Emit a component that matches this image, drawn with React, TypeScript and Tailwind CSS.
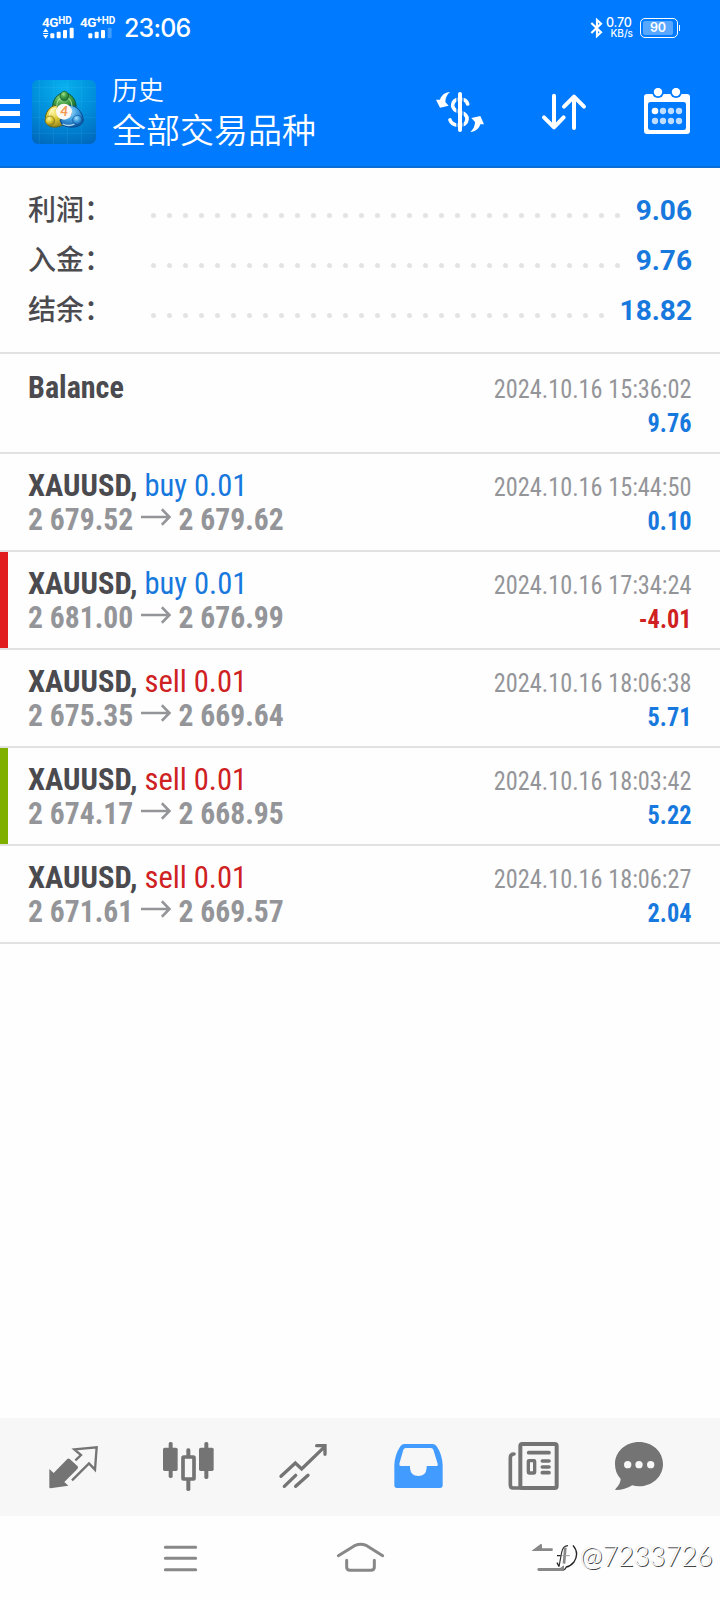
import type { ReactNode } from "react";

type Deal = {
  side?: "buy" | "sell";
  from?: string;
  to?: string;
  time: string;
  profit: string;
  mark?: "red" | "green";
};

const deals: Deal[] = [
  { side: "buy", from: "2 679.52", to: "2 679.62", time: "2024.10.16 15:44:50", profit: "0.10" },
  { side: "buy", from: "2 681.00", to: "2 676.99", time: "2024.10.16 17:34:24", profit: "-4.01", mark: "red" },
  { side: "sell", from: "2 675.35", to: "2 669.64", time: "2024.10.16 18:06:38", profit: "5.71" },
  { side: "sell", from: "2 674.17", to: "2 668.95", time: "2024.10.16 18:03:42", profit: "5.22", mark: "green" },
  { side: "sell", from: "2 671.61", to: "2 669.57", time: "2024.10.16 18:06:27", profit: "2.04" },
];

function SignalBars({ arrows, faded }: { arrows?: boolean; faded?: boolean }) {
  return (
    <svg className="h-[12px] w-[33px]" viewBox="0 0 99 36" fill="#fff">
      {arrows && (
        <>
          <path d="M3 15 L11 4 L19 15Z" />
          <path d="M3 24 L11 35 L19 24Z" />
          <rect x="3" y="18" width="16" height="3" />
        </>
      )}
      <rect x="25" y="19" width="12" height="15" rx="3" />
      <rect x="44" y="14" width="12" height="20" rx="3" />
      <rect x="63" y="9" width="12" height="25" rx="3" />
      <rect x="83" y="2" width="12" height="32" rx="3" opacity={faded ? 0.25 : 1} />
    </svg>
  );
}

function StatusBar() {
  return (
    <div className="flex h-14 items-start text-white">
      <div className="ml-[42px] mt-[16px] w-[37px]">
        <div className="flex h-[11px] items-start font-[Roboto] leading-none font-bold">
          <span className="text-[13.5px] leading-[13px] tracking-[-0.4px]">4G</span>
          <span className="text-[10px] leading-[9px]">HD</span>
        </div>
        <SignalBars arrows />
      </div>
      <div className="mt-[16px] ml-px w-[40px]">
        <div className="flex h-[11px] items-start font-[Roboto] leading-none font-bold">
          <span className="text-[13.5px] leading-[13px] tracking-[-0.6px]">4G</span>
          <span className="text-[11px] leading-[7px]">+</span>
          <span className="text-[10px] leading-[9px]">HD</span>
        </div>
        <SignalBars faded />
      </div>
      <div className="mt-[13px] ml-[4px] w-[80px] font-[Inter] text-[25px] leading-[30px] font-medium tracking-[-0.8px]">23:06</div>
      <svg className="mt-[18px] ml-auto h-[20px] w-[13px]" viewBox="0 0 39 60" fill="none" stroke="#fff" strokeWidth="6.5">
        <path d="M4 15 L33 43 L21 54 V6 L33 17 L4 45" />
      </svg>
      <div className="mt-[17px] ml-[3px] w-[27px] font-[Inter] font-medium">
        <div className="text-[12.5px] leading-[12px] tracking-[-0.2px]">0.70</div>
        <div className="text-right text-[10px] leading-[9px]">KB/s</div>
      </div>
      <div className="mt-[18px] ml-[7px] flex h-5 w-[38px] rounded-[5px] border border-white p-[2px]">
        <div className="flex w-[30px] items-center justify-center rounded-[2px] bg-white/35 font-[Inter] text-[12.5px] leading-none font-semibold">90</div>
      </div>
      <div className="mt-[25px] mr-[40px] ml-px h-[6px] w-px bg-white" />
    </div>
  );
}

function AppLogo() {
  return (
    <svg className="h-16 w-16" viewBox="0 0 192 192">
      <defs>
        <radialGradient id="tile" cx="50%" cy="12%" r="95%">
          <stop offset="0" stopColor="#08b0ee" />
          <stop offset="0.5" stopColor="#0090dc" />
          <stop offset="1" stopColor="#0069bd" />
        </radialGradient>
        <radialGradient id="green" cx="40%" cy="30%" r="70%">
          <stop offset="0" stopColor="#9be08a" />
          <stop offset="0.5" stopColor="#45a045" />
          <stop offset="1" stopColor="#156c34" />
        </radialGradient>
        <radialGradient id="yellow" cx="40%" cy="30%" r="70%">
          <stop offset="0" stopColor="#fff6a0" />
          <stop offset="0.5" stopColor="#ddc935" />
          <stop offset="1" stopColor="#9c8a1c" />
        </radialGradient>
        <radialGradient id="blue" cx="40%" cy="30%" r="70%">
          <stop offset="0" stopColor="#a8e2ff" />
          <stop offset="0.5" stopColor="#3f9fe0" />
          <stop offset="1" stopColor="#0f5ca8" />
        </radialGradient>
      </defs>
      <rect width="192" height="192" rx="18" fill="url(#tile)" />
      <path d="M22 0V192M64 0V192M106 0V192M148 0V192M0 22H192M0 64H192M0 112H192M0 160H192" stroke="#5fd0ff" strokeWidth="1.5" opacity="0.25" />
      <path d="M62 84 C60 60 76 40 97 38 C118 40 134 60 132 84 L116 92 L78 92Z" fill="url(#green)" stroke="#0d5a35" strokeWidth="3" />
      <path d="M84 138 C68 146 42 140 40 122 C38 98 54 76 74 76 L88 104 L98 136Z" fill="url(#yellow)" stroke="#5f6420" strokeWidth="3" />
      <path d="M112 76 C134 76 152 96 154 120 C152 142 116 148 90 134 L84 120 L118 104Z" fill="url(#blue)" stroke="#0b4a8c" strokeWidth="3" />
      <path d="M74 80 C74 62 84 52 97 52 C110 52 120 62 120 80" fill="none" stroke="#bfecae" strokeWidth="4" opacity="0.7" />
      <path d="M52 112 C52 96 60 86 72 84" fill="none" stroke="#fffad0" strokeWidth="4" opacity="0.8" />
      <path d="M92 132 C104 138 116 138 128 132" fill="none" stroke="#d4f1ff" strokeWidth="4" opacity="0.8" />
      <ellipse cx="97" cy="48" rx="13" ry="14" fill="url(#green)" stroke="#115c33" strokeWidth="2" />
      <circle cx="54" cy="122" r="14" fill="url(#yellow)" stroke="#7b7422" strokeWidth="2" />
      <circle cx="136" cy="120" r="14" fill="url(#blue)" stroke="#0f559c" strokeWidth="2" />
      <circle cx="96" cy="95" r="24" fill="#fbf8f4" />
      <text x="96" y="109" textAnchor="middle" fontFamily="Lato" fontWeight="900" fontStyle="italic" fontSize="40" fill="#f29a52">4</text>
    </svg>
  );
}

function Header() {
  return (
    <header className="h-[168px] border-b-2 border-[#0a6cd6] bg-[#007aff]">
      <StatusBar />
      <div className="flex text-white">
        <div className="mt-[43px] flex h-[29px] w-5 flex-col justify-between">
          <div className="h-[5px] bg-white" />
          <div className="h-[5px] bg-white" />
          <div className="h-[5px] bg-white" />
        </div>
        <div className="mt-6 ml-3">
          <AppLogo />
        </div>
        <div className="mt-[15px] ml-4 font-['Noto_Sans_CJK_SC',sans-serif] font-[350]">
          <div className="text-[26px] leading-[35px]">历史</div>
          <div className="text-[34px] leading-[46px]">全部交易品种</div>
        </div>
        <div className="mt-8 mr-7 ml-auto flex gap-[54px]">
          <svg className="h-[46px] w-[50px]" viewBox="105 264 150 138" fill="#fff">
            <path d="M150 276 C134 277 124 286 120 299 L108 299 L120 323 L146 317 L136 306 C136 294 141 284 150 276Z" />
            <path d="M211 396 C227 395 237 386 241 373 L252 373 L241 348 L214 354 L225 366 C225 378 220 388 211 396Z" />
            <path d="M203 312C200 301 191 297 179 297C165 298 157 306 158 317C160 332 172 333 182 337C194 341 202 346 201 358C200 370 190 377 176 376C162 375 153 369 150 360" fill="none" stroke="#fff" strokeWidth="11" strokeLinecap="round" />
            <path d="M171 284V388M189 284V388" stroke="#007aff" strokeWidth="4" />
            <rect x="174" y="276" width="12" height="120" rx="6" />
          </svg>
          <svg className="h-[46px] w-[50px]" viewBox="417 264 150 138" fill="none" stroke="#fff" strokeWidth="12" strokeLinecap="round" strokeLinejoin="round">
            <path d="M462 287V382M432 352L462 382L491 352" />
            <path d="M522 384V290M492 320L522 290L552 320" />
          </svg>
          <svg className="-ml-px h-[46px] w-[50px]" viewBox="726 264 150 138" fill="#fff">
            <path fillRule="evenodd" d="M741 282H861Q870 282 870 291V393Q870 402 861 402H741Q732 402 732 393V291Q732 282 741 282Z M751 306Q744 306 744 313V383Q744 390 751 390H851Q858 390 858 383V313Q858 306 851 306Z" />
            <g fill="#007aff">
              <circle cx="774" cy="276" r="18" />
              <circle cx="828" cy="276" r="18" />
            </g>
            <circle cx="774" cy="276" r="12.500" />
            <circle cx="828" cy="276" r="12.500" />
            <circle cx="765" cy="333" r="10" />
            <g opacity="0.75">
              <circle cx="789" cy="333" r="9.500" />
              <circle cx="813" cy="333" r="9.500" />
              <circle cx="837" cy="333" r="9.500" />
              <circle cx="765" cy="363" r="9.500" />
              <circle cx="789" cy="363" r="9.500" />
              <circle cx="813" cy="363" r="9.500" />
              <circle cx="837" cy="363" r="9.500" />
            </g>
          </svg>
        </div>
      </div>
    </header>
  );
}

function SummaryRow({ label, value, dots }: { label: string; value: string; dots: number }) {
  return (
    <div className="flex h-[50px] items-start px-7">
      <span className="w-[123px] font-['Noto_Sans_CJK_SC',sans-serif] text-[28px] leading-[46px] font-medium text-[#4a4a4f]">{label}</span>
      <div className="mt-[28px] flex gap-[11px]">
        {Array.from({ length: dots }, (_, i) => (
          <span key={i} className="size-[5px] rounded-full bg-[#e3e3e4]" />
        ))}
      </div>
      <span className="ml-auto font-[Roboto] text-[28px] leading-[52px] font-bold text-[#1778dd]">{value}</span>
    </div>
  );
}

function Row({ left, time, profit, mark, first }: { left: ReactNode; time: string; profit: string; mark?: "red" | "green"; first?: boolean }) {
  const markColor = mark === "red" ? "bg-[#e11d1f]" : mark === "green" ? "bg-[#7fb000]" : "";
  return (
    <div className={`flex border-b-2 border-[#e2e2e3] font-['Roboto_Condensed',Roboto,sans-serif] ${first ? "h-[100px]" : "h-[98px]"}`}>
      <div className={`w-2 ${markColor}`} />
      <div className={`ml-5 flex grow justify-between pr-7 ${first ? "pt-4" : "pt-3.5"}`}>
        <div className="text-[32px] leading-[34px] font-bold whitespace-pre text-[#4a4a4f]">{left}</div>
        <div className="mt-[2px] origin-right scale-x-[0.935] text-right text-[26px] leading-[34px]">
          <div className="text-[#949599]">{time}</div>
          <div className={`font-bold ${profit.startsWith("-") ? "text-[#cf2122]" : "text-[#1778dd]"}`}>{profit}</div>
        </div>
      </div>
    </div>
  );
}

function DealTitle({ deal }: { deal: Deal }) {
  return (
    <>
      <div className="origin-left scale-x-[0.955]">
        XAUUSD, <span className={`font-normal ${deal.side === "buy" ? "text-[#1778dd]" : "text-[#cf2122]"}`}>{deal.side} 0.01</span>
      </div>
      <div className="flex origin-left scale-x-[0.925] text-[#949599]">
        <span>{deal.from}</span>
        <svg className="mx-[8px] mt-[6px] h-[18px] w-[33px]" viewBox="0 0 96 54" preserveAspectRatio="none" fill="none" stroke="currentColor" strokeWidth="8">
          <path d="M0 27H90M66 4L90 27L66 50" />
        </svg>
        <span>{deal.to}</span>
      </div>
    </>
  );
}

function TabBar() {
  return (
    <nav className="flex h-[98px] bg-[#f7f7f7] pt-[23px] pl-12 text-[#747474]">
      <svg className="h-[50px] w-[52px]" viewBox="144 123 156 150" fill="currentColor">
        <path d="M148 207 L161 219 L202 177 Q206 174 210 178 L233 199 Q236 203 232 207 L193 246 L205 257 L151 265 Q148 265 148 262Z" />
        <path d="M226 181 L243 165 L223 148 L290 142 L285 209 L267 190 L216 241" fill="none" stroke="currentColor" strokeWidth="7" />
      </svg>
      <svg className="ml-[62px] h-[50px] w-[52px]" viewBox="486 123 156 150" fill="currentColor">
        <rect x="506" y="126" width="12" height="108" rx="5" />
        <rect x="489" y="143" width="44" height="70" rx="5" />
        <rect x="613" y="126" width="12" height="111" rx="5" />
        <rect x="597" y="143" width="44" height="70" rx="5" />
        <rect x="559" y="145" width="12" height="30" rx="5" />
        <rect x="559" y="235" width="12" height="38" rx="5" />
        <rect x="549" y="171" width="33" height="66" rx="2" fill="none" stroke="currentColor" strokeWidth="11" />
      </svg>
      <svg className="ml-[63px] h-[50px] w-[52px]" viewBox="831 123 156 150" fill="none" stroke="currentColor" strokeWidth="10" strokeLinecap="round">
        <path d="M843 229L886 189L905 207L972 142M950 137H975V163" />
        <path d="M853 259L887 226M887 259L924 226" />
      </svg>
      <svg className="ml-[64px] h-[50px] w-[52px]" viewBox="99 123 156 150">
        <path fillRule="evenodd" fill="#429bff" d="M133 132H217Q225 132 230 139Q247 165 248 195V256Q248 264 240 264H111Q103 264 103 256V195Q104 165 121 139Q126 132 133 132Z M137 144Q132 144 130 149L118 191Q117 198 123 198H150V204Q152 228 175 228Q198 228 200 204V198H228Q235 198 233 191L220 149Q218 144 213 144Z" />
      </svg>
      <svg className="ml-[63px] h-[50px] w-[52px]" viewBox="444 123 156 150" fill="none" stroke="currentColor" strokeLinecap="round" strokeLinejoin="round">
        <rect x="481" y="132" width="109" height="132" rx="6" strokeWidth="12" />
        <path d="M481 264H460Q451 264 451 254V173Q451 162 462 162" strokeWidth="11" />
        <path d="M506 158H567M547 183H567M547 201H567M547 218H567" strokeWidth="11" />
        <rect x="505" y="182" width="19" height="37" rx="2" strokeWidth="10" />
      </svg>
      <svg className="ml-[53px] h-[50px] w-[52px]" viewBox="759 123 156 150" fill="currentColor">
        <path d="M837 126C877 126 909 155 909 192C909 230 877 259 837 259Q826 259 817 256Q795 270 767 270Q764 269 767 266Q781 253 782 237C770 224 765 209 765 192C765 155 797 126 837 126Z" />
        <g fill="#f7f7f7">
          <circle cx="803" cy="194" r="11" />
          <circle cx="837" cy="194" r="11" />
          <circle cx="872" cy="194" r="11" />
        </g>
      </svg>
    </nav>
  );
}

function SystemNav() {
  return (
    <div className="relative flex h-[84px] bg-[#fefefe] pt-6 pl-[163px] text-[#888]">
      <svg className="h-[35px] w-[35px]" viewBox="489 420 105 105" stroke="currentColor" strokeWidth="9" strokeLinecap="round">
        <path d="M496 442H587M496 475H587M496 509H587" />
      </svg>
      <svg className="ml-[137px] h-[35px] w-[50px]" viewBox="1005 420 150 105" fill="none" stroke="currentColor" strokeWidth="9" strokeLinecap="round" strokeLinejoin="round">
        <path d="M1015 467L1066 436Q1082 429 1098 436L1148 467" />
        <path d="M1040 481V501Q1040 511 1050 511H1113Q1123 511 1123 501V481" />
      </svg>
      <svg className="ml-[145px] h-[35px] w-[45px]" viewBox="510 420 135 105" fill="currentColor">
        <path d="M515 452L542 432Q546 431 546 436V445H578V453H517Z" />
        <path d="M536 504H600L612 496V513H536Q532 512 532 508.500Q532 505 536 504Z" />
      </svg>
      <div className="absolute top-[25px] left-[553px] flex">
        <svg className="mt-[2px] h-[32px] w-[27px]" viewBox="100 46 81 96" fill="none">
          <path d="M148 55Q130 52 126 74L119 118" stroke="#fff" strokeWidth="12" />
          <path d="M145 54Q130 54 126 74L118 117" stroke="#333" strokeWidth="3.500" />
          <path d="M112 84H123M112 105L118 116" stroke="#222" strokeWidth="4" />
          <path d="M137 60L133 108" stroke="#888" strokeWidth="8" />
          <path d="M128 84H150" stroke="#999" strokeWidth="3" />
          <path d="M160 53Q180 76 163 103Q152 116 140 118L134 127" stroke="#222" strokeWidth="4" />
        </svg>
        <span className="font-[Lato] text-[27px] leading-[30px] font-light tracking-[0.1px] text-white [text-shadow:1px_1px_0_#444,-0.5px_-0.5px_0_#ddd]">@7233726</span>
      </div>
    </div>
  );
}

export default function App() {
  return (
    <div className="flex h-[1600px] w-[720px] flex-col overflow-hidden bg-[#fefefe]">
      <Header />
      <section className="h-[186px] border-b-2 border-[#e2e2e3] pt-[17px]">
        <SummaryRow label="利润：" value="9.06" dots={30} />
        <SummaryRow label="入金：" value="9.76" dots={30} />
        <SummaryRow label="结余：" value="18.82" dots={29} />
      </section>
      <main className="grow">
        <Row first left={<div className="origin-left scale-x-[0.94]">Balance</div>} time="2024.10.16 15:36:02" profit="9.76" />
        {deals.map((d) => (
          <Row key={d.time} left={<DealTitle deal={d} />} time={d.time} profit={d.profit} mark={d.mark} />
        ))}
      </main>
      <TabBar />
      <SystemNav />
    </div>
  );
}
